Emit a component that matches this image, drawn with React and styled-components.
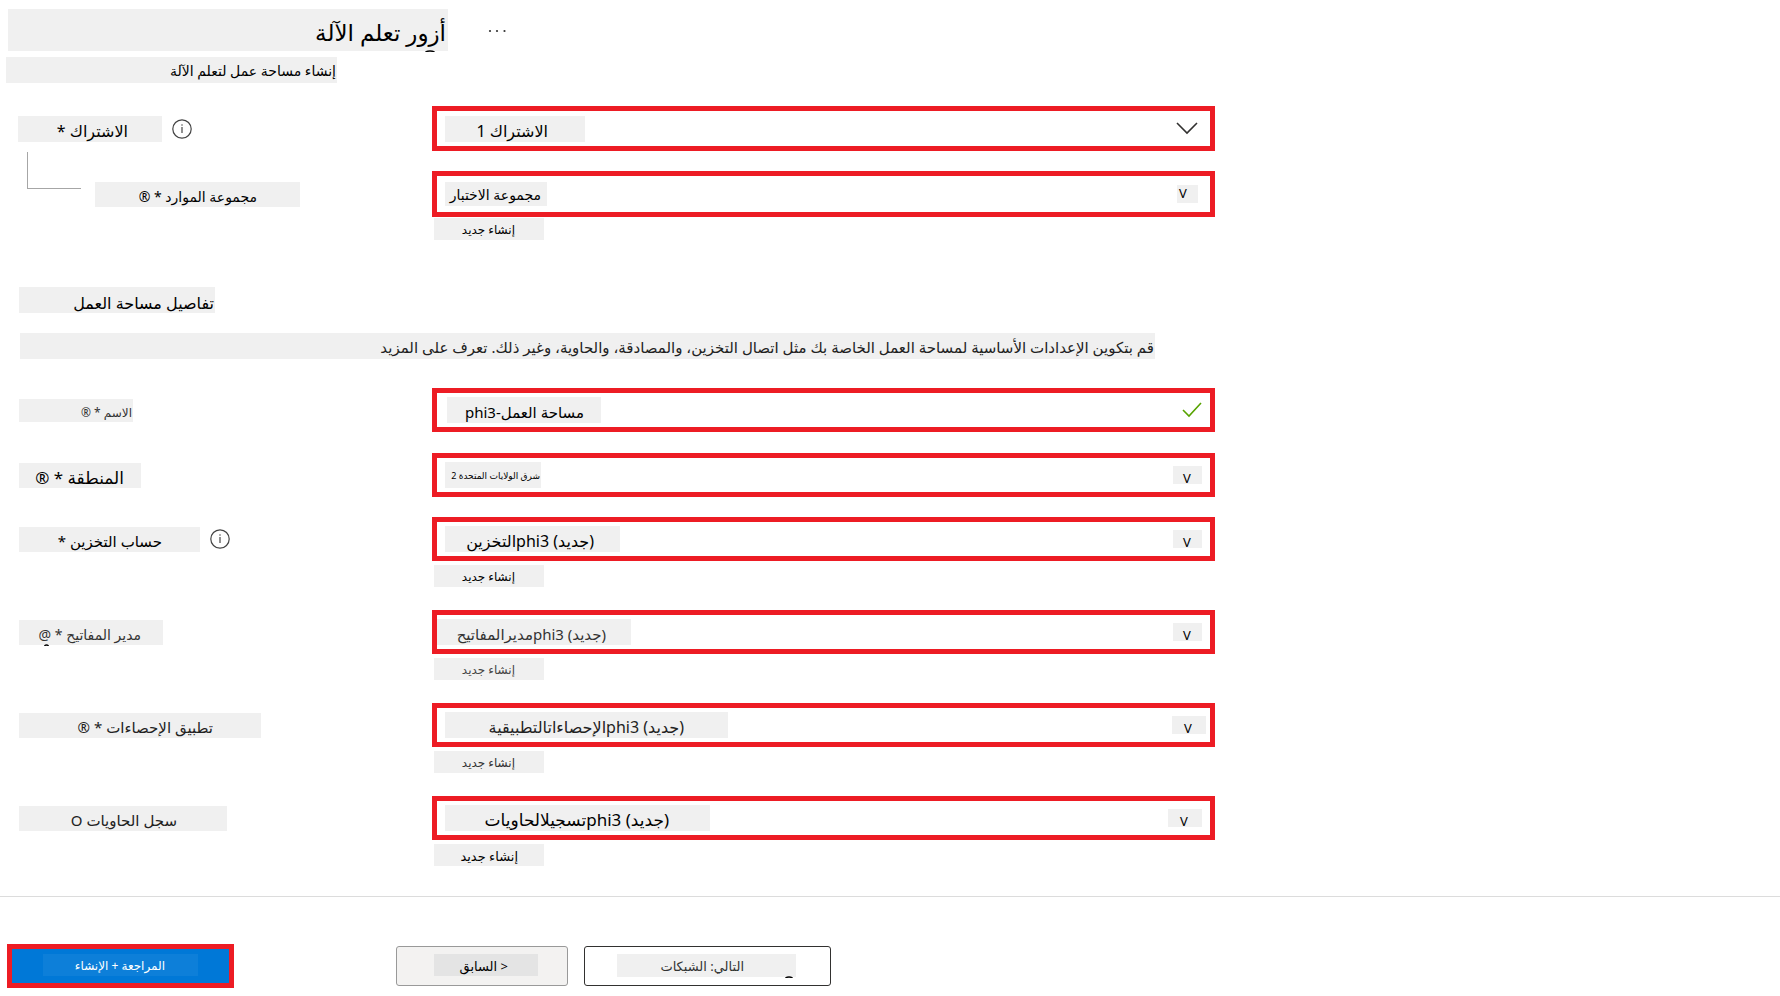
import React from "react";
import styled, { createGlobalStyle, css } from "styled-components";

const RED = "#ed1c24";
const PLATE = "#f0f0f0";

const GlobalStyle = createGlobalStyle`
  * { box-sizing: border-box; }
  body { margin: 0; background: #fff; color: #000; font-family: "Noto Sans", "DejaVu Sans", sans-serif; }
  button, input, select { font: inherit; color: inherit; margin: 0; }
  h1, h2, p { margin: 0; font-weight: 400; }
`;

const plate = css`
  display: block;
  width: ${(p) => p.$w}px;
  max-width: 100%;
  height: ${(p) => p.$h || 26}px;
  padding: 0 ${(p) => p.$end || 0}px 0 0;
  border: 0;
  border-radius: 0;
  background: ${PLATE};
  color: ${(p) => p.$ink || "#000"};
  font-size: ${(p) => p.$size || 16}px;
  line-height: ${(p) => (p.$h || 26) + 4}px;
  direction: rtl;
  text-align: right;
  white-space: nowrap;
`;

const control = css`
  ${plate}
  padding-top: ${(p) => (p.$raised ? 2 : 4)}px;
  line-height: 22px;
  appearance: none;
  outline: 0;
`;

const Page = styled.div`
  min-height: 100vh;
`;

const Header = styled.header`
  padding: 9px 0 0 6px;
`;

const TitleRow = styled.div`
  display: flex;
  align-items: flex-start;
  gap: 38px;
  padding-left: 2px;
`;

const Title = styled.h1`
  ${plate}
  position: relative;
`;

const Subtitle = styled.p`
  ${plate}
  margin-top: 6px;
  line-height: 28px;
`;

const MoreButton = styled.button`
  padding: 0;
  margin-top: 12px;
  border: 0;
  background: none;
  line-height: 0;
`;

const Form = styled.form`
  display: block;
`;

const Group = styled.section`
  display: flex;
  flex-direction: column;
  max-width: 1215px;
  padding-top: ${(p) => p.$top}px;
`;

const Row = styled.div`
  display: grid;
  grid-template-columns: 432px minmax(0, 1fr);
  margin-bottom: ${(p) => p.$gap || 20}px;
`;

const LabelCell = styled.div`
  position: relative;
  display: flex;
  align-items: center;
  gap: 10px;
  height: ${(p) => p.$h || 44}px;
  padding-left: ${(p) => p.$indent || 19}px;
`;

const Label = styled.label`
  ${plate}
  position: relative;
`;

const Connector = styled.span`
  position: absolute;
  left: 27px;
  bottom: 28px;
  width: 54px;
  height: 37px;
  border: solid #a6a6a6;
  border-width: 0 0 1px 1px;
`;

const Field = styled.div`
  display: flex;
  align-items: center;
  justify-content: space-between;
  height: ${(p) => p.$h || 44}px;
  padding: 0 ${(p) => p.$end || 8}px 0 ${(p) => p.$start || 0}px;
  border: 5px solid ${RED};
`;

const Select = styled.select`
  ${control}
`;

const Input = styled.input`
  ${control}
`;

const Arrow = styled.span`
  display: block;
  width: ${(p) => p.$w || 29}px;
  height: 18px;
  padding-left: ${(p) => p.$inset || 10}px;
  background: ${PLATE};
  font-size: 13px;
  line-height: ${(p) => (p.$raised ? 16 : 24)}px;
`;

const CreateLink = styled.a`
  ${plate}
  margin: ${(p) => p.$top || 4}px 0 0 2px;
  line-height: 24px;
  text-decoration: none;
`;

const SectionTitle = styled.h2`
  ${plate}
  margin-left: 19px;
  line-height: 32px;
`;

const Description = styled.p`
  ${plate}
  margin: 20px 0 29px 20px;
  line-height: 28px;
`;

const Footer = styled.footer`
  display: flex;
  align-items: center;
  margin-top: 7px;
  padding: 47px 0 8px 7px;
  border-top: 1px solid #dcdcdc;
`;

const Button = styled.button`
  display: flex;
  align-items: center;
  height: 40px;
  padding: 0 0 2px;
  border: 1px solid #323130;
  border-radius: 3px;
  background: #fff;
`;

const PrimaryButton = styled(Button)`
  width: 227px;
  height: 44px;
  padding-left: 31px;
  margin-right: 162px;
  border: 5px solid ${RED};
  border-radius: 0;
  background: #0078d7;
`;

const PreviousButton = styled(Button)`
  width: 172px;
  padding-left: 37px;
  margin-right: 16px;
  border-color: #999;
  background: #f3f2f1;
`;

const NextButton = styled(Button)`
  width: 247px;
  padding-left: 32px;
`;

const ButtonText = styled.span`
  ${plate}
  position: relative;
  line-height: 24px;
  background: ${(p) => p.$bg || PLATE};
`;

const Tail = styled.svg`
  position: absolute;
  right: ${(p) => p.$right}px;
  top: 100%;
  margin-top: -1px;
`;

const ArcTail = ({ right, width = 10 }) => (
  <Tail $right={right} width={width} height="2" viewBox="0 0 10 2" preserveAspectRatio="none" aria-hidden="true">
    <path d="M0.5 2Q5 0 9.5 2" fill="none" stroke="#000" strokeWidth="1.4" />
  </Tail>
);

const InfoIcon = () => (
  <svg width="20" height="20" viewBox="0 0 20 20" aria-hidden="true">
    <circle cx="10" cy="10" r="9.2" fill="none" stroke="#444" strokeWidth="1.2" />
    <path d="M10 8v6" stroke="#555" strokeWidth="1.3" />
    <circle cx="10" cy="6" r="0.8" fill="#555" />
  </svg>
);

const ChevronIcon = () => (
  <svg width="22" height="13" viewBox="0 0 22 13" aria-hidden="true">
    <path d="M1 1L11 11L21 1" fill="none" stroke="#323130" strokeWidth="1.6" />
  </svg>
);

const CheckIcon = () => (
  <svg width="20" height="16" viewBox="0 0 20 16" aria-hidden="true">
    <path d="M1 8L7 14L19 1" fill="none" stroke="#57a300" strokeWidth="1.6" />
  </svg>
);

const DotsIcon = () => (
  <svg width="20" height="20" viewBox="0 0 20 20" aria-hidden="true">
    <circle cx="4" cy="10" r="1.1" fill="#333" />
    <circle cx="11" cy="10" r="1.1" fill="#333" />
    <circle cx="18.5" cy="10" r="1.1" fill="#333" />
  </svg>
);

const WORKSPACE_ROWS = [
  {
    id: "region",
    label: { text: "المنطقة * ®", w: 122, end: 17, size: 17 },
    value: { text: "شرق الولايات المتحدة 2", w: 96, end: 1, size: 9, raised: true },
  },
  {
    id: "storage",
    label: { text: "حساب التخزين *", w: 181, end: 38, size: 15 },
    info: true,
    value: { text: "(جديد) phi3التخزين", w: 175, end: 26, size: 16 },
    create: { end: 29, size: 12 },
  },
  {
    id: "vault",
    label: { text: "مدير المفاتيح * @", w: 144, end: 22, size: 14, ink: "#333" },
    value: { text: "(جديد) phi3مديرالمفاتيح", w: 194, end: 25, size: 15, ink: "#333", flush: true },
    create: { end: 29, size: 12, ink: "#444" },
  },
  {
    id: "insights",
    label: { text: "تطبيق الإحصاءات * ®", w: 242, end: 48, size: 15, ink: "#222" },
    value: { text: "(جديد) phi3الإحصاءاتالتطبيقية", w: 283, end: 44, size: 16, ink: "#222" },
    create: { end: 29, size: 12, ink: "#333" },
    arrow: { w: 34, end: 4, inset: 12 },
  },
  {
    id: "registry",
    label: { text: "سجل الحاويات O", w: 208, end: 50, size: 15, ink: "#222" },
    value: { text: "(جديد) phi3تسجيلالحاويات", w: 265, end: 41, size: 17 },
    create: { end: 26, size: 13 },
    arrow: { w: 34, end: 8, inset: 12 },
  },
];

const FieldRow = ({ id, label, info, value, create, arrow = {} }) => (
  <Row $gap={create ? 23 : 20}>
    <LabelCell>
      <Label htmlFor={id} $w={label.w} $end={label.end} $size={label.size} $ink={label.ink} $h={25}>
        {label.text}
        {id === "vault" && <ArcTail right={114} width={5} />}
      </Label>
      {info && <InfoIcon />}
    </LabelCell>
    <div>
      <Field $start={value.flush ? 0 : 8} $end={arrow.end}>
        <Select id={id} $w={value.w} $end={value.end} $size={value.size} $ink={value.ink} $raised={value.raised}>
          <option>{value.text}</option>
        </Select>
        <Arrow $w={arrow.w} $inset={arrow.inset} aria-hidden="true">V</Arrow>
      </Field>
      {create && (
        <CreateLink href="#" $w={110} $h={22} $end={create.end} $size={create.size} $ink={create.ink}>
          إنشاء جديد
        </CreateLink>
      )}
    </div>
  </Row>
);

export default function App() {
  return (
    <Page lang="ar">
      <GlobalStyle />
      <Header>
        <TitleRow>
          <Title $w={440} $h={42} $end={2} $size={23}>
            أزور تعلم الآلة
            <ArcTail right={13} />
          </Title>
          <MoreButton type="button" aria-label="المزيد"><DotsIcon /></MoreButton>
        </TitleRow>
        <Subtitle $w={331} $end={1} $size={14}>إنشاء مساحة عمل لتعلم الآلة</Subtitle>
      </Header>
      <Form onSubmit={(e) => e.preventDefault()}>
        <Group $top={23}>
          <Row>
            <LabelCell $indent={18} $h={45}>
              <Label htmlFor="subscription" $w={144} $end={34} $size={16}>الاشتراك *</Label>
              <InfoIcon />
            </LabelCell>
            <Field $h={45} $start={8} $end={12}>
              <Select id="subscription" $w={140} $end={37} $size={16}>
                <option>الاشتراك 1</option>
              </Select>
              <ChevronIcon />
            </Field>
          </Row>
          <Row>
            <LabelCell $indent={95} $h={46}>
              <Connector />
              <Label htmlFor="group" $w={205} $end={43} $size={14} $h={25}>مجموعة الموارد * ®</Label>
            </LabelCell>
            <div>
              <Field $h={46} $start={8} $end={12}>
                <Select id="group" $w={102} $end={6} $size={14} $h={24} $raised>
                  <option>مجموعة الاختبار</option>
                </Select>
                <Arrow $w={21} $inset={2} $raised aria-hidden="true">V</Arrow>
              </Field>
              <CreateLink href="#" $top={1} $w={110} $h={22} $end={29} $size={12}>إنشاء جديد</CreateLink>
            </div>
          </Row>
        </Group>
        <Group $top={27}>
          <SectionTitle $w={196} $end={1} $size={16}>تفاصيل مساحة العمل</SectionTitle>
          <Description $w={1135} $end={1} $size={15} $ink="#222">
            قم بتكوين الإعدادات الأساسية لمساحة العمل الخاصة بك مثل اتصال التخزين، والمصادقة، والحاوية، وغير ذلك. تعرف على المزيد
          </Description>
          <Row $gap={21}>
            <LabelCell>
              <Label htmlFor="name" $w={114} $end={1} $size={12} $h={23} $ink="#333">الاسم * ®</Label>
            </LabelCell>
            <Field $start={10}>
              <Input id="name" $w={154} $end={17} $size={15} defaultValue="مساحة العمل-phi3" />
              <CheckIcon />
            </Field>
          </Row>
          {WORKSPACE_ROWS.map((row) => <FieldRow key={row.id} {...row} />)}
        </Group>
      </Form>
      <Footer>
        <PrimaryButton type="button">
          <ButtonText $w={155} $h={22} $end={33} $size={12} $ink="#fff" $bg="#0d7fd9">المراجعة + الإنشاء</ButtonText>
        </PrimaryButton>
        <PreviousButton type="button">
          <ButtonText $w={104} $h={22} $end={30} $size={13} $bg="#e4e4e4">{"< السابق"}</ButtonText>
        </PreviousButton>
        <NextButton type="button">
          <ButtonText $w={179} $h={23} $end={52} $size={13} $ink="#333">
            التالي: الشبكات
            <ArcTail right={3} width={8} />
          </ButtonText>
        </NextButton>
      </Footer>
    </Page>
  );
}
